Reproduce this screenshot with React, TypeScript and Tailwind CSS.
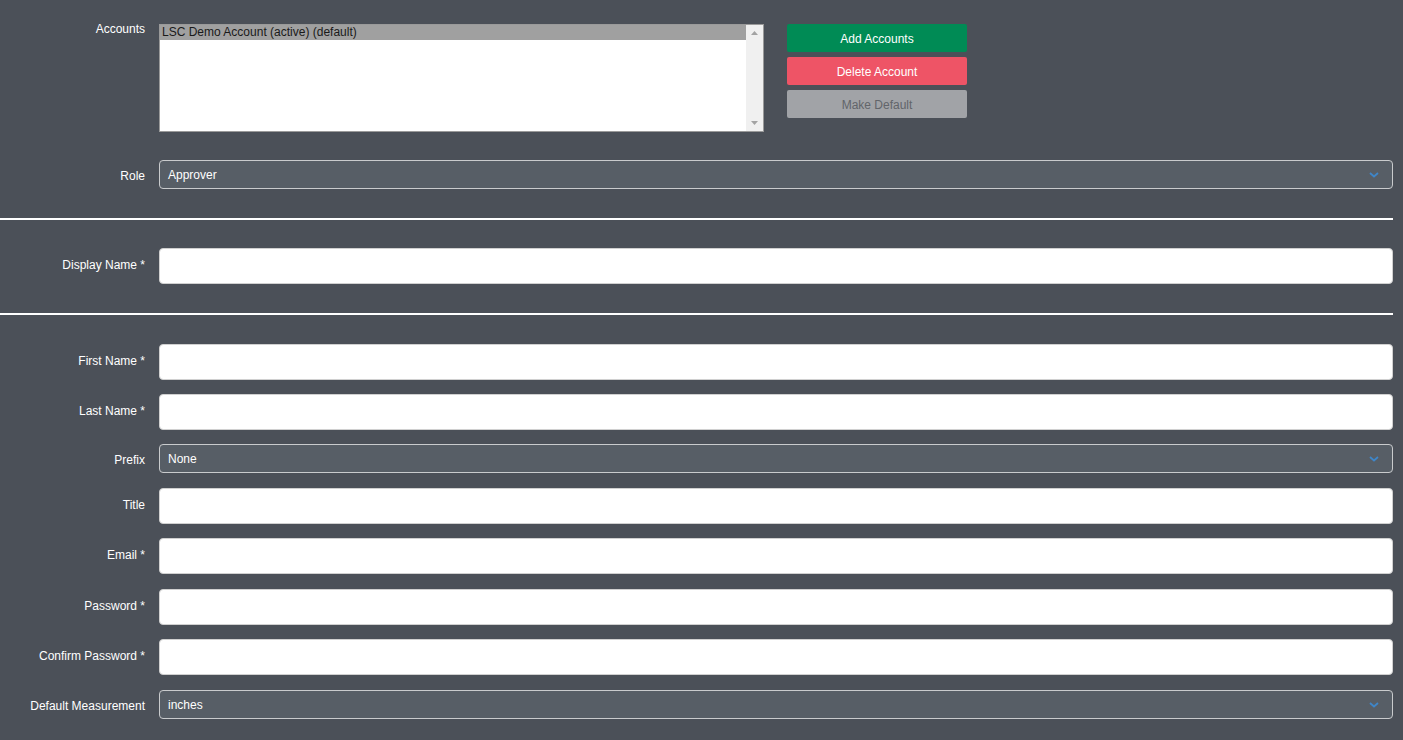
import React from 'react';

const font = { fontFamily: '"Liberation Sans", Arial, sans-serif' };

const Label: React.FC<{ text: string; pt?: string }> = ({ text, pt = 'pt-[10px]' }) => (
  <div className={`w-[145px] shrink-0 text-right text-[12px] leading-[14px] text-white ${pt}`}>{text}</div>
);

const TextRow: React.FC<{ label: string; type?: string; mt?: string }> = ({ label, type = 'text', mt = '' }) => (
  <div className={`flex gap-[14px] ${mt}`}>
    <Label text={label} />
    <input
      type={type}
      className="h-[36px] flex-1 rounded-[4px] border border-[#d0d0d0] bg-white px-[8px] text-[12px] text-black outline-none"
    />
  </div>
);

const Chevron = () => (
  <svg width="10" height="6" viewBox="0 0 10 6" className="shrink-0">
    <path d="M1 1l4 3.5L9 1" fill="none" stroke="#3f86c8" strokeWidth="1.8" />
  </svg>
);

const SelectRow: React.FC<{ label: string; value: string; mt?: string }> = ({ label, value, mt = '' }) => (
  <div className={`flex gap-[14px] ${mt}`}>
    <Label text={label} pt="pt-[9px]" />
    <div className="flex h-[29px] flex-1 items-center justify-between rounded-[4px] border border-[#c9cbcd] bg-[#575e66] pl-[8px] pr-[13px] text-[12px] text-white">
      <span>{value}</span>
      <Chevron />
    </div>
  </div>
);

const Divider = () => <div className="h-[2px] bg-white" />;

export default function App() {
  return (
    <div className="min-h-screen bg-[#4b5058] pr-[10px] pt-[24px]" style={font}>
      {/* accounts list + actions */}
      <div className="flex gap-[14px]">
        <Label text="Accounts" pt="-mt-[2px]" />
        <div className="flex h-[108px] w-[605px] border border-[#9a9a9a] bg-white">
          <div className="flex-1">
            <div className="h-[15px] bg-[#a0a0a0] pl-[2px] text-[12px] leading-[15px] text-[#1a1a1a]">
              LSC Demo Account (active) (default)
            </div>
          </div>
          <div className="flex w-[17px] flex-col items-center justify-between bg-[#f0f0f0] py-[6px]">
            <svg width="7" height="4" viewBox="0 0 7 4">
              <path d="M0 4L3.5 0L7 4z" fill="#a3a3a3" />
            </svg>
            <svg width="7" height="4" viewBox="0 0 7 4">
              <path d="M0 0L3.5 4L7 0z" fill="#a3a3a3" />
            </svg>
          </div>
        </div>
        <div className="ml-[9px] flex w-[180px] flex-col gap-[5px] text-[12px]">
          <button className="h-[28px] rounded-[2px] bg-[#008b55] pt-[1px] text-white">Add Accounts</button>
          <button className="h-[28px] rounded-[2px] bg-[#ee5466] pt-[1px] text-white">Delete Account</button>
          <button className="h-[28px] rounded-[2px] bg-[#a1a3a7] pt-[1px] text-[#62656a]">Make Default</button>
        </div>
      </div>

      <SelectRow label="Role" value="Approver" mt="mt-[28px]" />

      <div className="mt-[29px]">
        <Divider />
      </div>

      <TextRow label="Display Name *" mt="mt-[28px]" />

      <div className="mt-[29px]">
        <Divider />
      </div>

      <div className="pb-[22px] pt-[29px]">
        <TextRow label="First Name *" />
        <TextRow label="Last Name *" mt="mt-[14px]" />
        <SelectRow label="Prefix" value="None" mt="mt-[14px]" />
        <TextRow label="Title" mt="mt-[15px]" />
        <TextRow label="Email *" mt="mt-[14px]" />
        <TextRow label="Password *" type="password" mt="mt-[15px]" />
        <TextRow label="Confirm Password *" type="password" mt="mt-[14px]" />
        <SelectRow label="Default Measurement" value="inches" mt="mt-[15px]" />
      </div>
    </div>
  );
}
